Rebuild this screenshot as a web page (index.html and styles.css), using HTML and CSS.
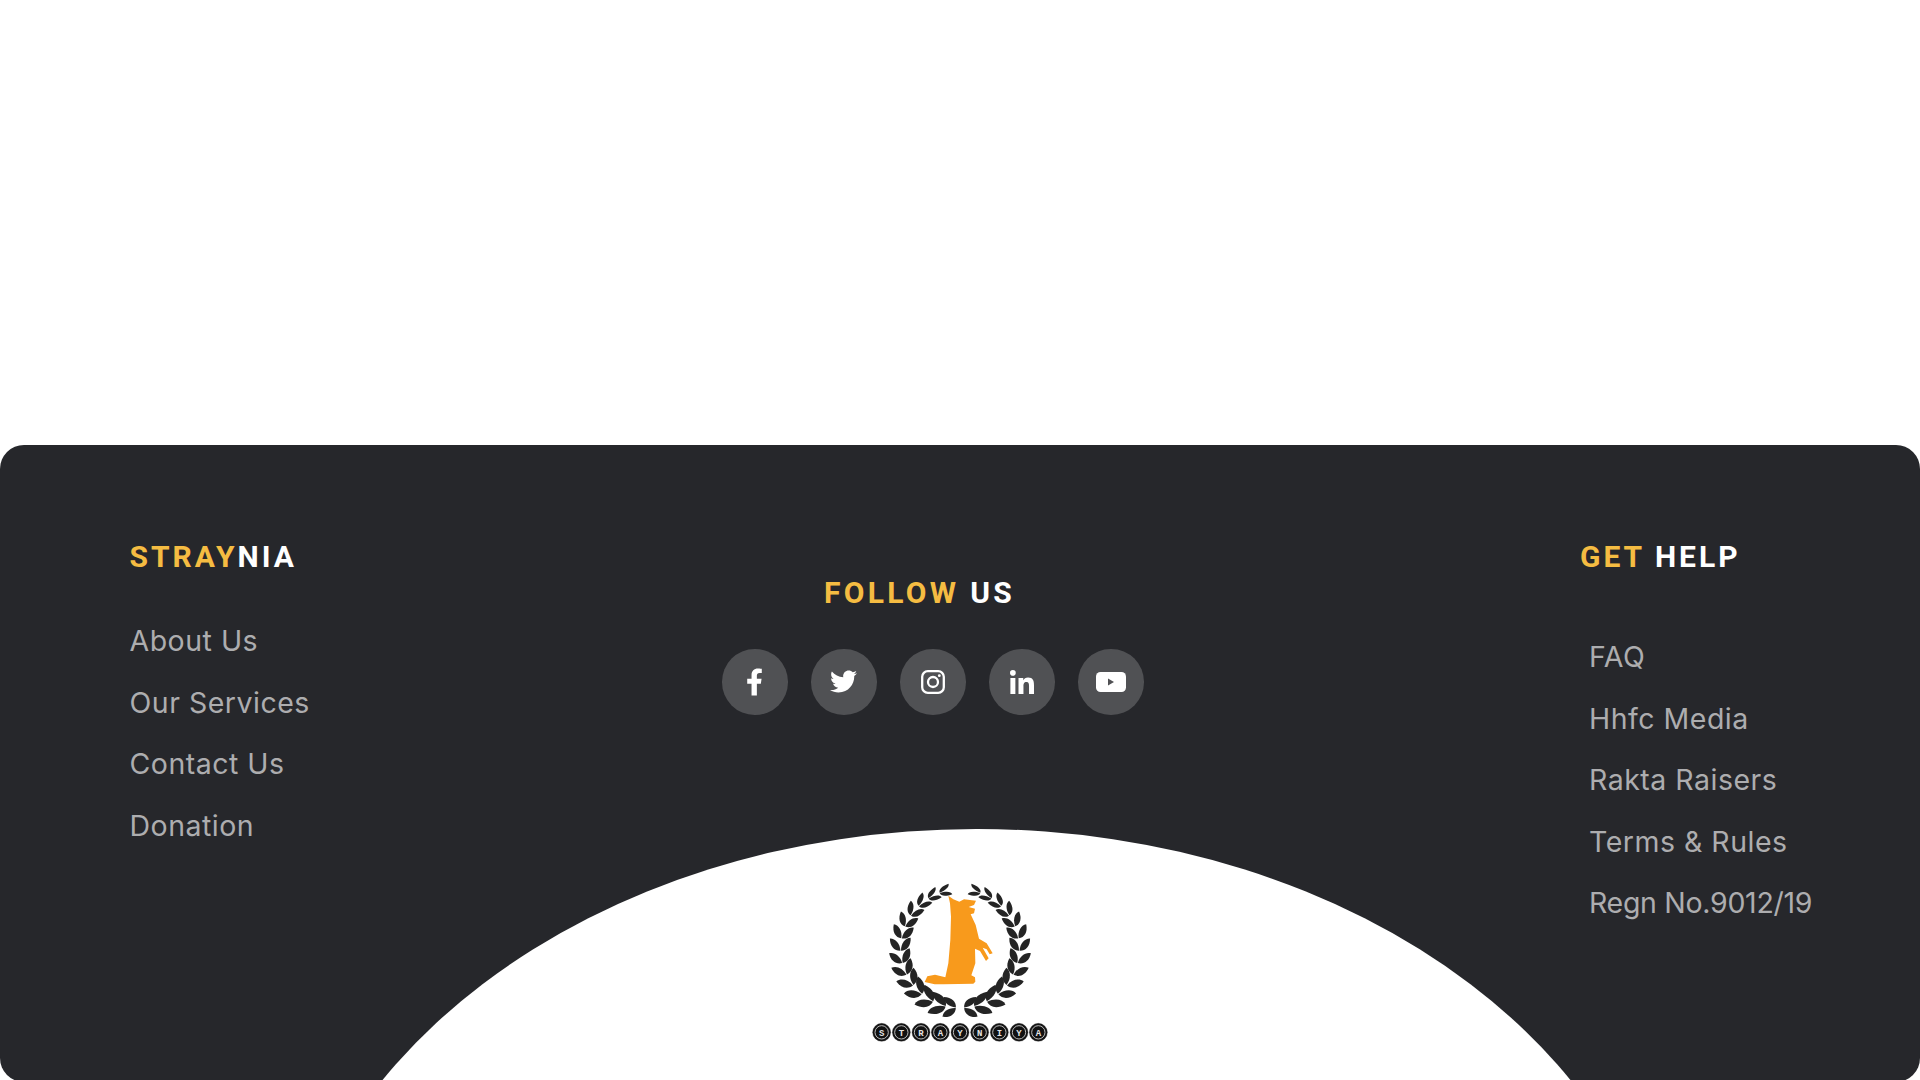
FILE: index.html
```html
<!DOCTYPE html>
<html lang="en">
<head>
<meta charset="utf-8">
<title>Straynia</title>
<link rel="stylesheet" href="styles.css">
</head>
<body>
<div class="page">
  <div class="spacer"></div>
  <footer class="footer">
    <div class="arch"></div>
    <section class="col col-brand">
      <h3 class="title"><span class="accent">STRAY</span>NIA</h3>
      <ul class="links">
        <li>About Us</li>
        <li>Our Services</li>
        <li>Contact Us</li>
        <li>Donation</li>
      </ul>
    </section>
    <section class="col col-follow">
      <h3 class="title title-follow"><span class="accent">FOLLOW</span> US</h3>
      <div class="socials">
        <a class="social"><svg class="ic-f" viewBox="0 0 320 512"><path d="M279.14 288l14.22-92.66h-88.91v-60.13c0-25.35 12.42-50.06 52.24-50.06h40.42V6.26S260.43 0 225.36 0c-73.22 0-121.08 44.38-121.08 124.72v70.62H22.89V288h81.39v224h100.17V288z"/></svg></a>
        <a class="social"><svg class="ic-t" viewBox="0 0 512 512"><path d="M459.37 151.716c.325 4.548.325 9.097.325 13.645 0 138.72-105.583 298.558-298.558 298.558-59.452 0-114.68-17.219-161.137-47.106 8.447.974 16.568 1.299 25.34 1.299 49.055 0 94.213-16.568 130.274-44.832-46.132-.975-84.792-31.188-98.112-72.772 6.498.974 12.995 1.624 19.818 1.624 9.421 0 18.843-1.3 27.614-3.573-48.081-9.747-84.143-51.98-84.143-102.985v-1.299c13.969 7.797 30.214 12.67 47.431 13.319-28.264-18.843-46.781-51.005-46.781-87.391 0-19.492 5.197-37.36 14.294-52.954 51.655 63.675 129.3 105.258 216.365 109.807-1.624-7.797-2.599-15.918-2.599-24.04 0-57.828 46.782-104.934 104.934-104.934 30.213 0 57.502 12.67 76.67 33.137 23.715-4.548 46.456-13.32 66.599-25.34-7.798 24.366-24.366 44.833-46.132 57.827 21.117-2.273 41.584-8.122 60.426-16.243-14.292 20.791-32.161 39.308-52.628 54.253z"/></svg></a>
        <a class="social"><svg class="ic-i" viewBox="0 0 24 24"><rect x="1.2" y="1.2" width="21.6" height="21.6" rx="5.6" fill="none" stroke="#fff" stroke-width="2.3"/><circle cx="12" cy="12" r="5" fill="none" stroke="#fff" stroke-width="2.3"/><circle cx="18.3" cy="5.7" r="1.4" fill="#fff"/></svg></a>
        <a class="social"><svg class="ic-l" viewBox="0 0 448 448"><path d="M100.28 448H7.4V148.9h92.88zM53.79 108.1C24.09 108.1 0 83.5 0 53.8a53.79 53.79 0 0 1 107.58 0c0 29.7-24.1 54.3-53.79 54.3zM447.9 448h-92.68V302.4c0-34.7-.7-79.2-48.29-79.2-48.29 0-55.69 37.7-55.69 76.7V448h-92.78V148.9h89.08v40.8h1.3c12.4-23.5 42.69-48.3 87.88-48.3 94 0 111.28 61.9 111.28 142.3V448z"/></svg></a>
        <a class="social"><svg class="ic-y" viewBox="0 0 30 20"><rect width="30" height="20" rx="4.5" fill="#fff"/><path d="M12 6.4v7.2l6-3.6z" fill="#505154"/></svg></a>
      </div>
    </section>
    <section class="col col-help">
      <h3 class="title"><span class="accent">GET</span> HELP</h3>
      <ul class="links links-help">
        <li>FAQ</li>
        <li>Hhfc Media</li>
        <li>Rakta Raisers</li>
        <li>Terms &amp; Rules</li>
        <li class="tight">Regn No.9012/19</li>
      </ul>
    </section>
    <svg class="logo" viewBox="0 0 720 600">
      <defs>
        <g id="pair">
          <path d="M0-1C0-20-14-34-38-33C-38-16-22-1 0-1Z"/>
          <path d="M0 1C0 20-14 34-38 33C-38 16-22 1 0 1Z"/>
        </g>
        <g id="branch" fill="#242424">
          <use href="#pair" transform="rotate(20 360 266) translate(360 88) scale(.9 .5)"/>
          <use href="#pair" transform="rotate(32 360 266) translate(360 88) scale(.92 .55)"/>
          <use href="#pair" transform="rotate(44 360 266) translate(360 88) scale(.94 .65)"/>
          <use href="#pair" transform="rotate(56 360 266) translate(360 88) scale(.96 .75)"/>
          <use href="#pair" transform="rotate(68 360 266) translate(360 88) scale(.98 .85)"/>
          <use href="#pair" transform="rotate(80 360 266) translate(360 88) scale(1 .92)"/>
          <use href="#pair" transform="rotate(92 360 266) translate(360 88) scale(1 .94)"/>
          <use href="#pair" transform="rotate(104 360 266) translate(360 88) scale(1 .96)"/>
          <use href="#pair" transform="rotate(116 360 266) translate(360 88) scale(1.02 .98)"/>
          <use href="#pair" transform="rotate(128 360 266) translate(360 88) scale(1.06 1)"/>
          <use href="#pair" transform="rotate(140 360 266) translate(360 88) scale(1.12 1)"/>
          <use href="#pair" transform="rotate(153 360 266) translate(360 88) scale(1.2 1)"/>
          <use href="#pair" transform="rotate(166 360 266) translate(360 88) scale(1.25 1)"/>
          <use href="#pair" transform="rotate(176 360 266) translate(360 88) scale(1 .9)"/>
        </g>
      </defs>
      <use href="#branch"/>
      <use href="#branch" transform="matrix(-1 0 0 1 720 0)"/>
      <path fill="#f89a1c" d="M325 107L340 118L358 125L372 118L408 122L402 135L386 141L405 146L402 160L392 163L407 195L417 236L440 250L458 280L449 283L440 268L428 263L446 295L438 303L420 273L405 266L406 310L394 346L405 352L406 365L400 371L310 373L284 373L254 366L262 349L285 344L316 352L325 310L331 240L333 170L330 130Z"/>
      <g class="badges">
        <circle cx="125" cy="517" r="27"/><circle cx="184" cy="517" r="27"/><circle cx="243" cy="517" r="27"/><circle cx="301" cy="517" r="27"/><circle cx="360" cy="517" r="27"/><circle cx="419" cy="517" r="27"/><circle cx="478" cy="517" r="27"/><circle cx="537" cy="517" r="27"/><circle cx="595" cy="517" r="27"/>
      </g>
      <g class="badge-rings">
        <circle cx="125" cy="517" r="20"/><circle cx="184" cy="517" r="20"/><circle cx="243" cy="517" r="20"/><circle cx="301" cy="517" r="20"/><circle cx="360" cy="517" r="20"/><circle cx="419" cy="517" r="20"/><circle cx="478" cy="517" r="20"/><circle cx="537" cy="517" r="20"/><circle cx="595" cy="517" r="20"/>
      </g>
      <g class="badge-text">
        <text x="125" y="527">S</text><text x="184" y="527">T</text><text x="243" y="527">R</text><text x="301" y="527">A</text><text x="360" y="527">Y</text><text x="419" y="527">N</text><text x="478" y="527">I</text><text x="537" y="527">Y</text><text x="595" y="527">A</text>
      </g>
    </svg>
  </footer>
</div>
</body>
</html>
```
FILE: styles.css
```css
* { box-sizing: border-box; }
html, body { margin: 0; padding: 0; background: #fff; }
.page { height: 1080px; overflow: hidden; display: flex; flex-direction: column; }
.spacer { height: 445px; flex: none; }
.footer {
  position: relative;
  flex: none;
  height: 637px;
  overflow: hidden;
  background: #26272b;
  border-radius: 24px;
  display: grid;
  grid-template-columns: 592.5px 858px 1fr;
  padding: 94px 0 0 129.5px;
}
.arch {
  position: absolute;
  left: 278.3px;
  top: 384px;
  width: 1396.4px;
  height: 1060px;
  border-radius: 50%;
  background: #fff;
}
.col { position: relative; }
.title {
  margin: 0;
  font-family: Roboto, sans-serif;
  font-weight: 700;
  font-size: 30px;
  line-height: 36px;
  letter-spacing: 3px;
  color: #fff;
  white-space: pre;
}
.accent { color: #f5bc42; }
.title-follow { margin: 36px 0 0 102px; letter-spacing: 3.3px; }
.links { list-style: none; margin: 35px 0 0; padding: 0; }
.links-help { margin-top: 51px; padding-left: 9px; }
.links li {
  font-family: Inter, sans-serif;
  font-weight: 400;
  font-size: 28.5px;
  line-height: 61.5px;
  letter-spacing: 0.5px;
  color: #adadaf;
  white-space: nowrap;
}
.links li.tight { letter-spacing: -0.3px; }
.socials { display: flex; gap: 23.6px; margin-top: 38px; }
.social {
  flex: none;
  width: 65.5px;
  height: 65.5px;
  border-radius: 50%;
  background: #505154;
  display: flex;
  align-items: center;
  justify-content: center;
}
.social svg { display: block; fill: #fff; }
.ic-f { width: 17px; height: 28px; }
.ic-t { width: 27px; height: 27px; }
.ic-i { width: 24px; height: 24px; }
.ic-l { width: 24px; height: 24px; }
.ic-y { width: 30px; height: 20px; }
.logo {
  position: absolute;
  left: 840px;
  top: 415px;
  width: 240px;
  height: 200px;
}
.badges circle { fill: #141414; stroke: #222; stroke-width: 1; }
.badge-rings circle { fill: #111; stroke: #b9b9b9; stroke-width: 3; }
.badge-text text {
  font-family: "Liberation Mono", monospace;
  font-weight: 700;
  font-size: 27px;
  fill: #e4e4e4;
  text-anchor: middle;
}
```
